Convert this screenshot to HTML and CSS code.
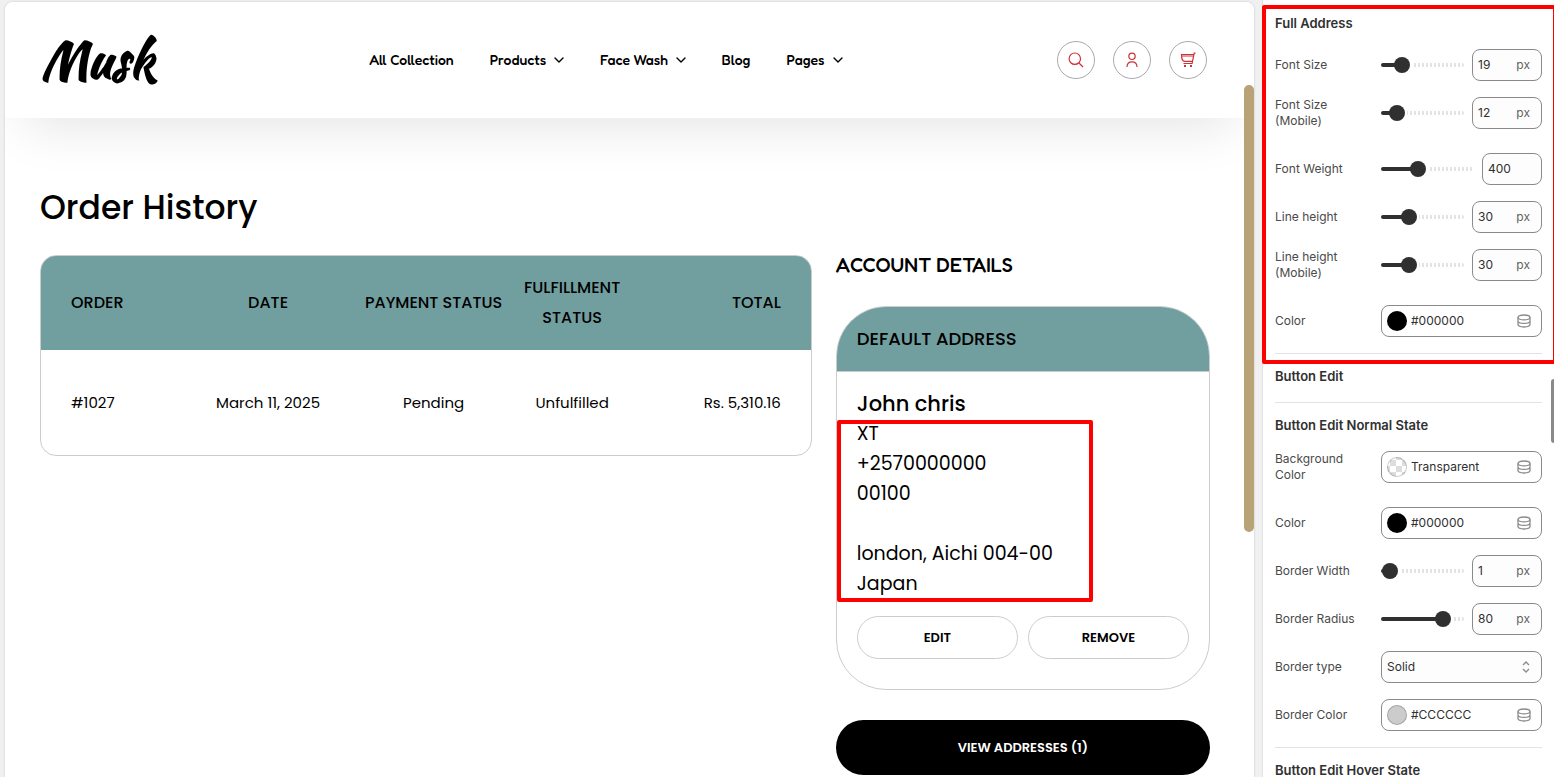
FILE: index.html
```
<!DOCTYPE html>
<html lang="en">

<head>
    <meta charset="utf-8">
    <title>Order History - Musk</title>
    <link rel="stylesheet" href="styles.css">
</head>

<body>
    <svg class="sprite" aria-hidden="true">
        <symbol id="chevron" viewBox="0 0 10 6">
            <path d="M1 1l4 4 4-4" fill="none" stroke="currentColor" stroke-width="1.4" stroke-linecap="round" stroke-linejoin="round"/>
        </symbol>
        <symbol id="database" viewBox="0 0 14 14">
            <g fill="none" stroke="currentColor" stroke-width="1.3">
                <ellipse cx="7" cy="3.4" rx="6" ry="2.4"/>
                <path d="M1 3.4v7.2C1 12 3.7 13 7 13s6-1 6-2.4V3.4M1 7c0 1.3 2.7 2.4 6 2.4S13 8.300 13 7M1 5.200v4M13 5.200v4"/>
            </g>
        </symbol>
    </svg>

    <div class="preview">
        <header class="site-header">
            <a class="logo" href="#">Musk</a>
            <nav class="menu">
                <a href="#">All Collection</a>
                <a href="#">Products <svg class="chevron"><use href="#chevron"/></svg></a>
                <a href="#">Face Wash <svg class="chevron"><use href="#chevron"/></svg></a>
                <a href="#">Blog</a>
                <a href="#">Pages <svg class="chevron"><use href="#chevron"/></svg></a>
            </nav>
            <div class="tools">
                <button type="button" aria-label="Search">
                    <svg viewBox="0 0 16 16"><circle cx="6.800" cy="6.700" r="5.700"/><path d="M11 11l4 4"/></svg>
                </button>
                <button type="button" aria-label="Account">
                    <svg viewBox="0 0 16 16"><circle cx="8" cy="4.300" r="3.200"/><path d="M3 15c0-3.300 2-5.200 5-5.200s5 1.900 5 5.200"/></svg>
                </button>
                <button type="button" aria-label="Cart">
                    <svg viewBox="0 0 16 16"><path d="M15.500 1.200h-1.300L12.500 9.300H4.500C2 9.300 1.700 7 1.500 2.500h12.300M12.500 9.300l-.4 2.200H3.500M2 4h11"/><path class="wheels" d="M4 13h2v2H4zM10 13h2v2h-2z"/></svg>
                </button>
            </div>
        </header>

        <main class="account">
            <h1>Order History</h1>
            <div class="columns">
                <div class="orders">
                    <table>
                        <colgroup>
                            <col class="col-order"><col class="col-date"><col class="col-payment"><col class="col-fulfil"><col class="col-total">
                        </colgroup>
                        <thead>
                            <tr>
                                <th>ORDER</th>
                                <th>DATE</th>
                                <th>PAYMENT STATUS</th>
                                <th>FULFILLMENT STATUS</th>
                                <th>TOTAL</th>
                            </tr>
                        </thead>
                        <tbody>
                            <tr>
                                <td><a href="#">#1027</a></td>
                                <td>March 11, 2025</td>
                                <td>Pending</td>
                                <td>Unfulfilled</td>
                                <td>Rs. 5,310.16</td>
                            </tr>
                        </tbody>
                    </table>
                </div>

                <section class="details">
                    <h2>ACCOUNT DETAILS</h2>
                    <div class="card">
                        <h3>DEFAULT ADDRESS</h3>
                        <div class="card-body">
                            <p class="name">John chris</p>
                            <address class="marked">
                                XT<br>
                                +2570000000<br>
                                00100<br>
                                <br>
                                london, Aichi 004-00<br>
                                Japan
                            </address>
                            <div class="actions">
                                <button type="button">EDIT</button>
                                <button type="button">REMOVE</button>
                            </div>
                        </div>
                    </div>
                    <a class="view-all" href="#">VIEW ADDRESSES (1)</a>
                </section>
            </div>
        </main>
        <div class="page-scroll"></div>
    </div>

    <aside class="settings">
        <section class="group marked">
            <h4>Full Address</h4>
            <div class="field">
                <label for="size">Font Size</label>
                <div class="control">
                    <input type="range" min="0" max="100" value="19" style="--value: 0.19" aria-label="Font Size slider">
                    <span class="box number"><input type="text" id="size" value="19">px</span>
                </div>
            </div>
            <div class="field tall">
                <label for="size-mobile">Font Size (Mobile)</label>
                <div class="control">
                    <input type="range" min="0" max="100" value="12" style="--value: 0.12" aria-label="Font Size (Mobile) slider">
                    <span class="box number"><input type="text" id="size-mobile" value="12">px</span>
                </div>
            </div>
            <div class="field">
                <label for="weight">Font Weight</label>
                <div class="control">
                    <input type="range" min="100" max="900" step="100" value="400" style="--value: 0.375" aria-label="Font Weight slider">
                    <span class="box number plain"><input type="text" id="weight" value="400"></span>
                </div>
            </div>
            <div class="field">
                <label for="line">Line height</label>
                <div class="control">
                    <input type="range" min="0" max="100" value="30" style="--value: 0.3" aria-label="Line height slider">
                    <span class="box number"><input type="text" id="line" value="30">px</span>
                </div>
            </div>
            <div class="field tall">
                <label for="line-mobile">Line height (Mobile)</label>
                <div class="control">
                    <input type="range" min="0" max="100" value="30" style="--value: 0.3" aria-label="Line height (Mobile) slider">
                    <span class="box number"><input type="text" id="line-mobile" value="30">px</span>
                </div>
            </div>
            <div class="field">
                <label for="color">Color</label>
                <div class="box color">
                    <span class="swatch black"></span>
                    <input type="text" id="color" value="#000000">
                    <svg class="database"><use href="#database"/></svg>
                </div>
            </div>
        </section>

        <section class="group">
            <h4>Button Edit</h4>
        </section>

        <section class="group">
            <h4>Button Edit Normal State</h4>
            <div class="field tall">
                <label for="bg">Background Color</label>
                <div class="box color">
                    <span class="swatch clear"></span>
                    <input type="text" id="bg" value="Transparent">
                    <svg class="database"><use href="#database"/></svg>
                </div>
            </div>
            <div class="field">
                <label for="edit-color">Color</label>
                <div class="box color">
                    <span class="swatch black"></span>
                    <input type="text" id="edit-color" value="#000000">
                    <svg class="database"><use href="#database"/></svg>
                </div>
            </div>
            <div class="field">
                <label for="border-width">Border Width</label>
                <div class="control">
                    <input type="range" min="0" max="100" value="1" style="--value: 0.01" aria-label="Border Width slider">
                    <span class="box number"><input type="text" id="border-width" value="1">px</span>
                </div>
            </div>
            <div class="field">
                <label for="radius">Border Radius</label>
                <div class="control">
                    <input type="range" min="0" max="100" value="80" style="--value: 0.8" aria-label="Border Radius slider">
                    <span class="box number"><input type="text" id="radius" value="80">px</span>
                </div>
            </div>
            <div class="field">
                <label for="type">Border type</label>
                <div class="box picker">
                    <select id="type">
                        <option>Solid</option>
                        <option>Dashed</option>
                        <option>Dotted</option>
                    </select>
                    <svg viewBox="0 0 8 12"><path d="M1 4l3-3 3 3M1 8l3 3 3-3"/></svg>
                </div>
            </div>
            <div class="field">
                <label for="border-color">Border Color</label>
                <div class="box color">
                    <span class="swatch grey"></span>
                    <input type="text" id="border-color" value="#CCCCCC">
                    <svg class="database"><use href="#database"/></svg>
                </div>
            </div>
        </section>

        <section class="group">
            <h4>Button Edit Hover State</h4>
        </section>
        <div class="panel-scroll"></div>
    </aside>
</body>

</html>
```
FILE: styles.css
```
*, *::after {
    box-sizing: border-box;
}

body {
    display: flex;
    gap: 8px;
    height: 100vh;
    margin: 0;
    padding-left: 5px;
    overflow: hidden;
    background: #f0f0f0;
    color: #000;
    font-family: Poppins, Inter, sans-serif;
}

a {
    color: inherit;
    text-decoration: none;
}

h1, h2, h3, h4, p {
    margin: 0;
    font-weight: 500;
}

button, input, select {
    font: inherit;
    color: inherit;
}

.sprite {
    display: none;
}

/* store preview */
.preview {
    position: relative;
    flex: 1;
    margin-top: 2px;
    overflow: hidden;
    background: #fff;
    border-radius: 8px 8px 0 0;
    box-shadow: 0 0 2px #bbb;
}

.site-header {
    display: flex;
    align-items: center;
    justify-content: space-between;
    height: 116px;
    padding: 0 47px 0 36px;
    background: #fff;
    box-shadow: 0 30px 50px -20px rgba(0, 0, 0, .1);
}

.logo {
    font: 700 50px/60px "Kaushan Script", Lato, cursive;
}

.menu {
    display: flex;
    gap: 36px;
    font: 500 14px/20px Fredoka, Lato, sans-serif;
}

.menu a {
    display: flex;
    align-items: center;
    gap: 8px;
}

.chevron {
    width: 10px;
    height: 6px;
}

.tools {
    display: flex;
    gap: 18px;
}

.tools button {
    display: grid;
    place-items: center;
    width: 38px;
    height: 38px;
    padding: 0;
    background: #fff;
    border: 1px solid #aaa;
    border-radius: 50%;
}

.tools svg {
    width: 16px;
    height: 16px;
    fill: none;
    stroke: #cd3237;
    stroke-width: 1.2;
}

.tools .wheels {
    fill: #cd3237;
    stroke: none;
}

.account {
    padding: 64px 44px 0 35px;
}

h1 {
    font-size: 33px;
    line-height: 52px;
}

.columns {
    display: grid;
    grid-template-columns: 66fr 32fr;
    align-items: start;
    gap: 24px;
    margin-top: 21px;
}

.orders {
    overflow: hidden;
    border: 1px solid #ccc;
    border-radius: 16px;
}

.orders table {
    width: 100%;
    table-layout: fixed;
    border-collapse: collapse;
    font-size: 15px;
    line-height: 30px;
    text-align: center;
}

.col-order { width: 19%; }
.col-date { width: 21%; }
.col-payment { width: 22%; }
.col-fulfil { width: 14%; }
.col-total { width: 24%; }

.orders th {
    height: 94px;
    padding: 0;
    background: #719e9e;
    font-size: 16px;
    font-weight: 500;
}

.orders td {
    height: 105px;
    padding: 0;
}

.orders th:first-child,
.orders td:first-child {
    padding-left: 30px;
    text-align: left;
}

.orders th:last-child,
.orders td:last-child {
    padding-right: 30px;
    text-align: right;
}

h2 {
    font: 500 20px/20px Fredoka, Lato, sans-serif;
}

.card {
    margin-top: 31px;
    border: 1px solid #ccc;
    border-radius: 50px;
    overflow: hidden;
}

h3 {
    padding: 17px 20px;
    background: #719e9e;
    border-bottom: 1px solid #ccc;
    font-size: 18px;
    line-height: 30px;
}

.card-body {
    padding: 17px 20px 30px;
}

.name {
    font-size: 21px;
    line-height: 30px;
}

address {
    font-size: 19px;
    font-style: normal;
    line-height: 30px;
}

/* red highlight frames */
.marked {
    position: relative;
}

.marked::after {
    content: "";
    position: absolute;
    border: 4px solid #f00;
    border-radius: 2px;
    pointer-events: none;
}

address.marked::after {
    top: 1px;
    bottom: -3px;
    left: -20px;
    width: 256px;
}

.group.marked::after {
    inset: 4px -15px -11px -13px;
}

.actions {
    display: flex;
    gap: 10px;
    margin-top: 17px;
}

.actions button {
    flex: 1;
    height: 43px;
    background: #fff;
    border: 1px solid #ccc;
    border-radius: 22px;
    font-size: 13px;
    font-weight: 600;
}

.view-all {
    display: block;
    margin-top: 30px;
    background: #000;
    border-radius: 30px;
    color: #fff;
    font-size: 13px;
    font-weight: 600;
    line-height: 55px;
    text-align: center;
}

.page-scroll {
    position: absolute;
    top: 83px;
    right: 0;
    width: 10px;
    height: 447px;
    background: #b9a376;
    border-radius: 5px;
}

/* editor sidebar */
.settings {
    position: relative;
    width: 292px;
    padding: 1px 12px 0 12px;
    background: #fff;
    border-left: 1px solid #e3e3e3;
    color: #303030;
    font: 12px/16px Inter, sans-serif;
}

.group {
    display: flex;
    flex-direction: column;
    gap: 16px;
    padding: 12px 0 16px;
    border-bottom: 1px solid #e3e3e3;
}

h4 {
    font-size: 13px;
    font-weight: 600;
    line-height: 20px;
}

.field {
    display: grid;
    grid-template-columns: 90px 161px;
    gap: 16px;
    align-items: center;
}

.tall {
    margin-bottom: 8px;
}

.field label {
    color: #4a4a4a;
}

.control {
    display: flex;
    align-items: center;
    gap: 8px;
}

.box {
    display: flex;
    align-items: center;
    height: 32px;
    border: 1px solid #8a8a8a;
    border-radius: 8px;
    background: #fff;
}

.box input {
    flex: 1;
    min-width: 0;
    padding: 0;
    border: 0;
    background: none;
    outline: none;
}

.number {
    width: 70px;
    padding: 0 11px 0 5px;
    background: #fdfdfd;
    color: #616161;
}

.number input {
    color: #303030;
}

.plain {
    width: 60px;
}

input[type=range] {
    --stop: calc(8px + var(--value) * (100% - 16px));
    flex: 1;
    min-width: 0;
    height: 16px;
    margin: 0;
    appearance: none;
    background: none;
}

input[type=range]::-webkit-slider-runnable-track {
    height: 4px;
    border-radius: 2px;
    background:
        linear-gradient(to right, #303030 var(--stop), #fff var(--stop), #fff calc(var(--stop) + 10px), transparent 0),
        repeating-linear-gradient(to right, #fff 0 1px, #e3e3e3 1px 3px, #fff 3px 4px);
}

input[type=range]::-webkit-slider-thumb {
    width: 16px;
    height: 16px;
    margin-top: -6px;
    appearance: none;
    background: #303030;
    border-radius: 50%;
}

.color {
    gap: 4px;
    padding: 0 10px 0 5px;
}

.swatch {
    width: 20px;
    height: 20px;
    border: 1px solid rgba(0, 0, 0, .2);
    border-radius: 50%;
}

.black { background: #000; }
.grey { background: #ccc; }
.clear { background: repeating-conic-gradient(#fff 0 25%, #ddd 0 50%) 2px 2px / 12px 12px; }

.database {
    width: 14px;
    height: 14px;
    color: #8a8a8a;
}

.picker {
    position: relative;
    background: #fdfdfd;
}

.picker select {
    width: 100%;
    height: 100%;
    padding: 0 5px;
    appearance: none;
    background: none;
    border: 0;
}

.picker svg {
    position: absolute;
    right: 11px;
    width: 8px;
    height: 12px;
    fill: none;
    stroke: #8a8a8a;
    stroke-width: 1.3;
    pointer-events: none;
}

.panel-scroll {
    position: absolute;
    top: 379px;
    right: 0;
    width: 3px;
    height: 64px;
    background: #8a8a8a;
    border-radius: 3px 0 0 3px;
}
```
